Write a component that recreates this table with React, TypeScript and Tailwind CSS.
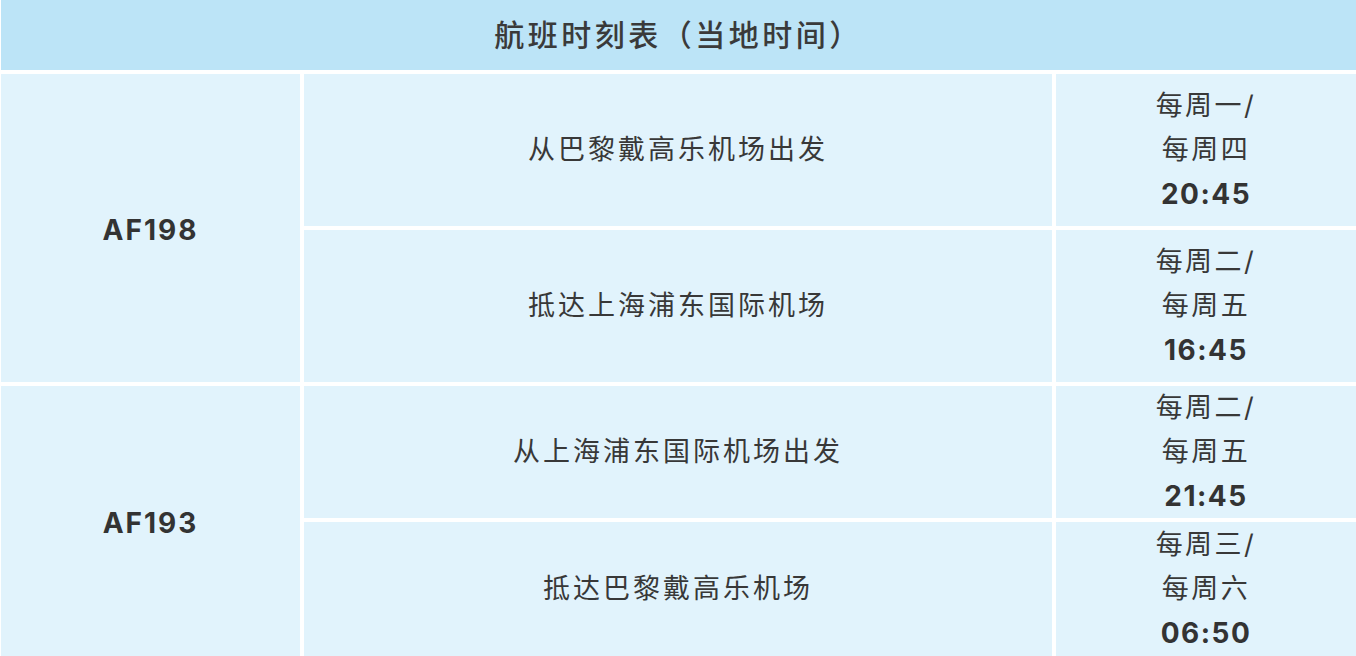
import React from "react";

const font = { fontFamily: '"Inter", "Noto Sans CJK SC", sans-serif' };

function TimeCell({ a, b, t }: { a: string; b: string; t: string }) {
  return (
    <div className="bg-[#e1f3fc] flex flex-col items-center justify-center text-[27px] leading-[44px] tracking-[2.5px] text-[#383838]">
      <div>{a}</div>
      <div>{b}</div>
      <div className="font-bold text-[28px] tracking-[1.5px] text-[#333333]">{t}</div>
    </div>
  );
}

function PlaceCell({ text }: { text: string }) {
  return (
    <div className="bg-[#e1f3fc] flex items-center justify-center text-[27px] tracking-[3px] text-[#383838]">
      {text}
    </div>
  );
}

function FlightCell({ code }: { code: string }) {
  return (
    <div className="row-span-2 bg-[#e1f3fc] flex items-center justify-center pt-1 text-[28px] font-bold tracking-[2px] text-[#333333]">
      {code}
    </div>
  );
}

export default function App() {
  return (
    <div className="w-[1356px] h-[656px] overflow-hidden bg-white pl-px flex flex-col gap-1" style={font}>
      <div className="h-[70px] shrink-0 bg-[#bce4f7] flex items-center justify-center text-[30px] font-medium tracking-[3.5px] text-[#3a3a3a]">
        航班时刻表（当地时间）
      </div>
      <div className="grid grid-cols-[299px_748px_1fr] grid-rows-[152px_152px_132px_134px] gap-1">
        <FlightCell code="AF198" />
        <PlaceCell text="从巴黎戴高乐机场出发" />
        <TimeCell a="每周一/" b="每周四" t="20:45" />
        <PlaceCell text="抵达上海浦东国际机场" />
        <TimeCell a="每周二/" b="每周五" t="16:45" />
        <FlightCell code="AF193" />
        <PlaceCell text="从上海浦东国际机场出发" />
        <TimeCell a="每周二/" b="每周五" t="21:45" />
        <PlaceCell text="抵达巴黎戴高乐机场" />
        <TimeCell a="每周三/" b="每周六" t="06:50" />
      </div>
    </div>
  );
}
